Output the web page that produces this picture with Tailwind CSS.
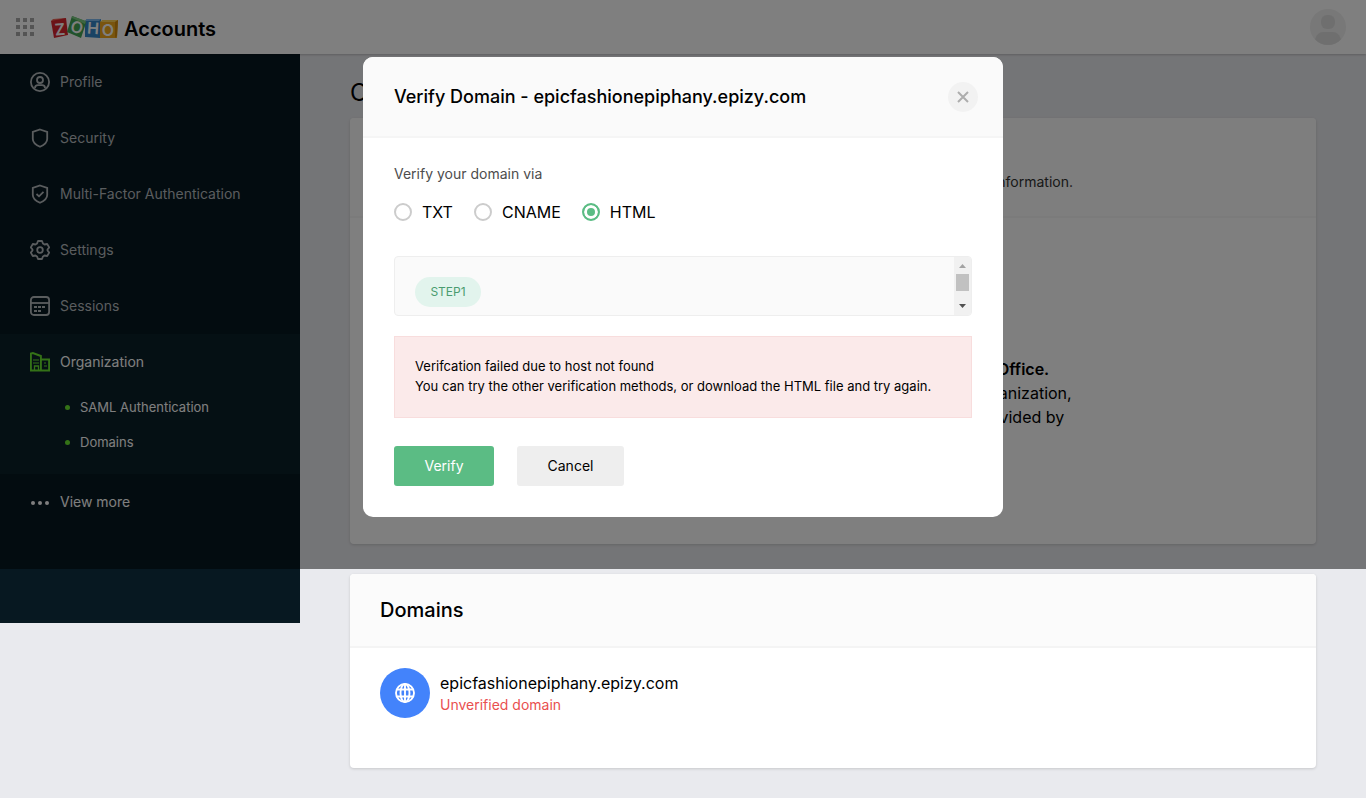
<!DOCTYPE html>
<html lang="en">
<head>
<meta charset="utf-8">
<meta name="viewport" content="width=device-width, initial-scale=1">
<title>Zoho Accounts</title>
<script src="https://cdn.jsdelivr.net/npm/@tailwindcss/browser@4"></script>
</head>
<body class="relative min-h-screen bg-[#e9eaee] font-['Inter','Liberation_Sans',sans-serif] text-black">

<header class="relative flex h-[54px] items-center justify-between bg-white pl-4 pr-5 shadow-[0_1px_2px_rgba(0,0,0,0.2)]">
  <div class="flex items-center">
    <button type="button" aria-label="Apps" class="mr-[17px]">
      <svg class="block" width="18" height="18" viewBox="0 0 18 18" fill="#a9a9a9"><path d="M0 0h4v4H0zM7 0h4v4H7zM14 0h4v4h-4zM0 7h4v4H0zM7 7h4v4H7zM14 7h4v4h-4zM0 14h4v4H0zM7 14h4v4H7zM14 14h4v4h-4z"/></svg>
    </button>
    <a href="#" class="flex items-center gap-[6px] text-xl font-semibold">
      <svg width="67" height="24" viewBox="0 0 67 24" role="img" aria-label="Zoho" font-family="Inter, sans-serif" font-size="16" font-weight="600" fill="#fff" text-anchor="middle">
        <path d="M0 6l2-2 13-1-2 3z" fill="#ef6b5c"/><path d="M0 6l15-3 2 17-14 3z" fill="#d9262f"/>
        <path d="M34 6l2-2h14l-1 19-15-1z" fill="#3486c9"/><path d="M34 6l2-2h14l-2 2z" fill="#7fbaf0"/>
        <path d="M21 1l13 5 1 2-5 15-14-6z" fill="#43a455"/><path d="M21 1l14 5-1 3-13-6z" fill="#7ccb83"/>
        <path d="M49 7l3-2h15l-1 18H49z" fill="#f2a91c"/><path d="M49 7l3-2h15l-3 2z" fill="#ffd358"/><path d="M64 7l3-2-1 16-2 2z" fill="#d58a0d"/>
        <text x="9" y="20" transform="rotate(-5 9 14)">Z</text>
        <text x="26" y="18" transform="rotate(15 26 12)">O</text>
        <text x="42" y="19" transform="rotate(4 42 13)">H</text>
        <text x="57" y="21">O</text>
      </svg>
      <span class="pt-1">Accounts</span>
    </a>
  </div>
  <button type="button" aria-label="Account" class="h-9 w-9 overflow-hidden rounded-full bg-[#f0f0f0]">
    <svg class="block" width="36" height="36" viewBox="0 0 36 36" fill="#dfdfdf"><rect x="11" y="6" width="14" height="14" rx="6"/><path d="M5 31c1-5 4-8 8-8h10c4 0 7 3 8 8-3 4-8 6-13 6S8 35 5 31z"/></svg>
  </button>
</header>

<div class="flex items-start">
  <nav class="min-h-[569px] w-[300px] shrink-0 bg-[#071821] text-sm text-[#b5babd]">
    <a href="#" class="flex h-14 items-center gap-[10px] pl-[30px]">
      <svg width="20" height="20" viewBox="0 0 20 20" fill="none" stroke="currentColor" stroke-width="1.800"><circle cx="10" cy="10" r="9.100"/><circle cx="10" cy="8" r="3"/><path d="M5 16c0-2 1.300-2.800 3-2.800h4c1.700 0 3 .8 3 2.800"/></svg>
      <span>Profile</span></a>
    <a href="#" class="flex h-14 items-center gap-[10px] pl-[30px]">
      <svg width="20" height="20" viewBox="0 0 20 20" fill="none" stroke="currentColor" stroke-width="1.800"><path d="M10 1.500L17.200 4v7c0 3-2.700 5.800-7.200 7.800C5.500 16.800 2.800 14 2.800 11V4z"/></svg>
      <span>Security</span></a>
    <a href="#" class="flex h-14 items-center gap-[10px] pl-[30px]">
      <svg width="20" height="20" viewBox="0 0 20 20" fill="none" stroke="currentColor" stroke-width="1.800"><path d="M10 1.500L17.200 4v7c0 3-2.700 5.800-7.200 7.800C5.500 16.800 2.800 14 2.800 11V4z"/><path d="M6.500 10l2.500 2.300 4.500-4.500"/></svg>
      <span>Multi-Factor Authentication</span></a>
    <a href="#" class="flex h-14 items-center gap-[10px] pl-[30px]">
      <svg width="20" height="20" viewBox="0 0 20 20" fill="none" stroke="currentColor" stroke-width="1.800" stroke-linejoin="round"><path d="M8 1h4l1 2.600 1.500.9 2.700-.5 2 3.400-1.700 2.100v1l1.700 2.100-2 3.400-2.700-.5-1.500.9L12 19H8l-1-2.600-1.500-.9-2.700.5-2-3.400 1.700-2.100v-1L.8 7.400l2-3.400 2.700.5L7 3.600z"/><circle cx="10" cy="10" r="2.800"/></svg>
      <span>Settings</span></a>
    <a href="#" class="flex h-14 items-center gap-[10px] pl-[30px]">
      <svg width="20" height="20" viewBox="0 0 20 20" fill="none" stroke="currentColor" stroke-width="1.800"><rect x=".9" y="1" width="18.200" height="18" rx="3"/><path d="M1 7h18"/><path d="M4 11h12M4 15h7" stroke-dasharray="3 1"/></svg>
      <span>Sessions</span></a>
    <div class="bg-[#0b2028] pb-[14px] text-white">
      <a href="#" class="flex h-14 items-center gap-[10px] pl-[30px]">
        <svg width="20" height="20" viewBox="0 0 20 20" fill="none" stroke="#69e52e" stroke-width="1.900"><path d="M.9 18.500V1.500l2-.5 8 3v14.500M11 7.500h8.100v11H0"/><path d="M3 8h6M3 11h6M14 11H16M14 14H17" stroke-width="1.200"/><path d="M4.500 18v-4h4v4" stroke-width="1.300"/></svg>
        <span>Organization</span></a>
      <ul class="text-[13px]">
        <li><a href="#" class="flex h-[35px] items-center gap-[10px] pl-[65px]"><span class="h-[5px] w-[5px] rounded-full bg-[#69e52e]"></span>SAML Authentication</a></li>
        <li><a href="#" class="flex h-[35px] items-center gap-[10px] pl-[65px]"><span class="h-[5px] w-[5px] rounded-full bg-[#69e52e]"></span>Domains</a></li>
      </ul>
    </div>
    <a href="#" class="flex h-14 items-center gap-[10px] pl-[30px] text-white">
      <svg width="20" height="20" viewBox="0 0 20 20" fill="currentColor"><circle cx="3" cy="11" r="2"/><circle cx="10" cy="11" r="2"/><circle cx="17" cy="11" r="2"/></svg>
      <span>View more</span></a>
  </nav>

  <main class="min-w-0 flex-1 px-[50px] pb-[30px] pt-6">
    <h1 class="mb-[10px] h-[30px] text-2xl leading-[30px]">Organization</h1>
    <section class="mb-[30px] h-[426px] overflow-hidden rounded bg-white shadow-[0_1px_3px_rgba(0,0,0,0.15)]">
      <div class="h-[100px] border-b-2 border-[#f6f6f6] bg-[#fcfcfc] px-[30px] pt-[54px]">
        <p class="max-w-[693px] whitespace-nowrap text-right text-sm leading-5 text-[#333]">View your organization information.</p>
      </div>
      <div class="pt-[139px] text-center text-base leading-6">
        <h2 class="font-semibold">You can manage your organization through Zoho Office.</h2>
        <p class="whitespace-nowrap">Bring together all of the members who are in your organization,<br>and manage all the services and the applications provided by</p>
      </div>
    </section>
    <section class="min-h-[194px] overflow-hidden rounded bg-white shadow-[0_1px_3px_rgba(0,0,0,0.15)]">
      <h2 class="flex h-[74px] items-center border-b-2 border-[#f4f4f4] bg-[#fbfbfb] px-[30px] text-xl font-medium">Domains</h2>
      <div class="flex items-center gap-[10px] px-[30px] py-5">
        <div class="flex h-[50px] w-[50px] items-center justify-center rounded-full bg-[#4383fb]">
          <svg width="20" height="20" viewBox="0 0 20 20" fill="none" stroke="#fff" stroke-width="1.900"><circle cx="10" cy="10" r="9"/><ellipse cx="10" cy="10" rx="4.500" ry="9"/><path d="M10 1v18M2 6.500h16M2 13.500h16"/></svg>
        </div>
        <div>
          <p class="text-base leading-6">epicfashionepiphany.epizy.com</p>
          <p class="text-sm leading-5 text-[#e9504f]">Unverified domain</p>
        </div>
      </div>
    </section>
  </main>
</div>

<div class="absolute inset-x-0 top-0 flex h-[569px] items-start justify-center bg-black/50 pt-[57px]">
  <div role="dialog" aria-labelledby="dialog-title" class="w-[640px] max-w-full overflow-hidden rounded-[10px] bg-white">
    <div class="flex h-[81px] items-center justify-between border-b-2 border-[#f5f5f5] bg-[#fafafa] pl-[31px] pr-[25px]">
      <h2 id="dialog-title" class="text-lg font-medium">Verify Domain - epicfashionepiphany.epizy.com</h2>
      <button type="button" aria-label="Close" class="flex h-[30px] w-[30px] items-center justify-center rounded-full bg-[#f2f2f2]">
        <svg width="12" height="12" viewBox="0 0 12 12" stroke="#adadad" stroke-width="2"><path d="M1 1l10 10M11 1L1 11"/></svg>
      </button>
    </div>
    <form class="px-[31px] pb-[31px] pt-[26px]">
      <fieldset>
        <legend class="text-sm leading-5 text-[#4d4d4d]">Verify your domain via</legend>
        <div class="flex gap-[21px] pt-4 text-base leading-6">
          <label class="flex items-center gap-[10px]"><input type="radio" name="method" class="h-[18px] w-[18px] appearance-none rounded-full border-2 border-[#ccc]">TXT</label>
          <label class="flex items-center gap-[10px]"><input type="radio" name="method" class="h-[18px] w-[18px] appearance-none rounded-full border-2 border-[#ccc]">CNAME</label>
          <label class="flex items-center gap-[10px]"><input type="radio" name="method" checked class="h-[18px] w-[18px] appearance-none rounded-full border-2 border-[#5bbc84] bg-[#5bbc84] shadow-[inset_0_0_0_3px_white]">HTML</label>
        </div>
      </fieldset>
      <div class="mt-8 flex h-[60px] overflow-hidden rounded border border-[#eee] bg-[#fafafa]">
        <div class="flex-1 px-5 pt-5">
          <span class="flex h-[30px] w-[66px] items-center justify-center rounded-full bg-[#e2f4ed] text-xs text-[#4a9c70]">STEP1</span>
        </div>
        <div class="flex w-[17px] flex-col items-center justify-between bg-[#f1f1f1]" aria-hidden="true">
          <svg width="17" height="17" viewBox="0 0 17 17" fill="#a3a3a3"><path d="M5 11h7L8.500 7z"/></svg>
          <div class="mb-auto h-[17px] w-[13px] bg-[#c1c1c1]"></div>
          <svg width="17" height="17" viewBox="0 0 17 17" fill="#505050"><path d="M5 6h7l-3.500 4z"/></svg>
        </div>
      </div>
      <div role="alert" class="mt-5 border border-[#f8dddd] bg-[#fbeaea] px-5 pb-[21px] pt-[19px] text-[13px] leading-5">
        <p>Verifcation failed due to host not found</p>
        <p>You can try the other verification methods, or download the HTML file and try again.</p>
      </div>
      <div class="mt-7 flex gap-[23px] text-sm">
        <button type="submit" class="h-10 w-[100px] rounded-[3px] bg-[#5bbc84] text-white">Verify</button>
        <button type="button" class="h-10 w-[107px] rounded-[3px] bg-[#eee]">Cancel</button>
      </div>
    </form>
  </div>
</div>
</body>
</html>
